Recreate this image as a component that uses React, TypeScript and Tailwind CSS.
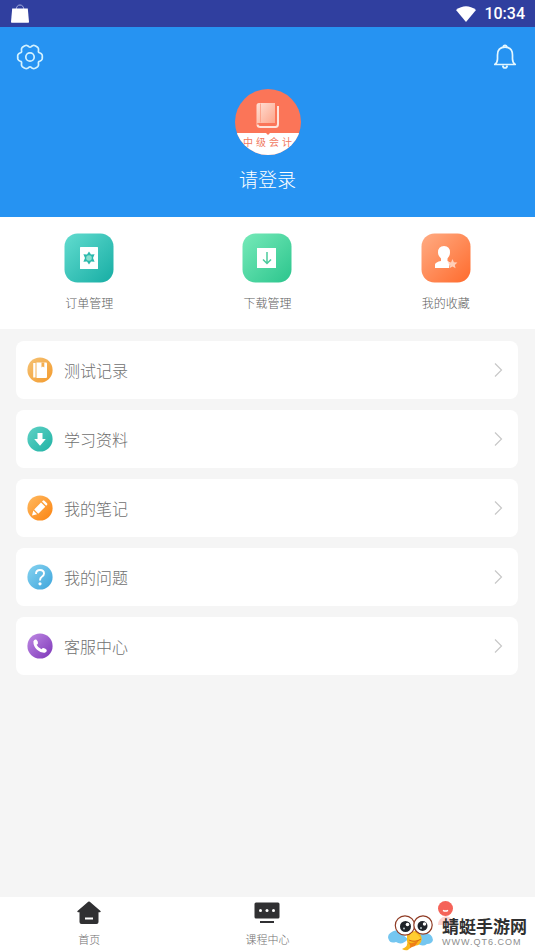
import type { ReactNode } from "react";

const gearPath =
  Array.from({ length: 120 }, (_, i) => {
    const a = (i / 120) * Math.PI * 2;
    const r = 11.5 + 1.2 * Math.cos(6 * a) - 0.4 * Math.cos(12 * a);
    return `${i ? "L" : "M"}${(14 + r * Math.cos(a)).toFixed(2)} ${(14 + r * Math.sin(a)).toFixed(2)}`;
  }).join("") + "Z";

function Gradient({ id, from, to }: { id: string; from: string; to: string }) {
  return (
    <defs>
      <linearGradient id={id} x1="0" y1="0" x2="1" y2="1">
        <stop offset="0" stopColor={from} />
        <stop offset="1" stopColor={to} />
      </linearGradient>
    </defs>
  );
}

function StatusBar() {
  return (
    <div className="flex h-[27px] items-center justify-between bg-[#303f9f] px-[10px] text-white">
      <svg className="h-5 w-5" viewBox="0 0 20 20">
        <path d="M6 6Q6.500 1 10 1Q13.500 1 14 6" fill="none" stroke="#aab2e0" strokeWidth="1" />
        <path d="M2.200 4.500h15.600L19 18Q19 18.700 18.300 18.700H1.700Q1 18.700 1 18Z" fill="#fff" />
      </svg>
      <div className="flex items-center gap-2">
        <svg className="h-4 w-5" viewBox="0 0 20 16">
          <path d="M0 4Q10-3.500 20 4L10 16Z" fill="#fff" />
        </svg>
        <span className="pt-px font-['Roboto',sans-serif] text-base font-medium">10:34</span>
      </div>
    </div>
  );
}

function Avatar() {
  return (
    <div className="relative h-[66px] w-[66px] overflow-hidden rounded-full bg-[#fb7558]">
      <svg className="absolute inset-0 h-full w-full" viewBox="0 0 66 66">
        <defs>
          <linearGradient id="book" x1="0" y1="0" x2="1" y2="1">
            <stop offset="0" stopColor="#ffe1d6" />
            <stop offset="1" stopColor="#fda287" />
          </linearGradient>
        </defs>
        <path d="M24 14h16v20H24q-2.500 0-2.500 2V16.500q0-2.500 2.500-2.500Z" fill="url(#book)" />
        <path d="M25.500 14.500V33.500" stroke="#fb9a80" strokeWidth="0.800" />
        <path d="M43 17v17.500M22.500 35.500Q22.500 38 25.500 38H40.500Q43 38 43 35V17" fill="none" stroke="#ffe3da" strokeWidth="2" />
        <path d="M0 44H66V66H0Z" fill="#fff" />
        <path d="M31 44h4l-2 2Z" fill="#fb7558" />
      </svg>
      <span className="absolute inset-x-0 top-[47px] flex justify-center gap-[3px] text-[10px] leading-3 text-[#f0785f]">
        <span>中</span>
        <span>级</span>
        <span>会</span>
        <span>计</span>
      </span>
    </div>
  );
}

function Header() {
  return (
    <header className="relative flex h-[190px] flex-col items-center bg-[#2693f2] pt-[62px] text-white">
      <button aria-label="设置" className="absolute top-4 left-4">
        <svg className="h-7 w-7" viewBox="0 0 28 28" fill="none" stroke="#d3f2ff" strokeWidth="1.700" strokeLinejoin="round">
          <path d={gearPath} />
          <circle cx="14" cy="14" r="4.200" />
        </svg>
      </button>
      <button aria-label="消息" className="absolute top-[17px] right-[18px]">
        <svg className="h-[26px] w-6" viewBox="0 0 24 26" fill="none" stroke="#e4f7ff" strokeWidth="1.700" strokeLinejoin="round">
          <path d="M10.300 3.300Q10.300 1.400 12 1.400Q13.700 1.400 13.700 3.300" />
          <path d="M1.800 20.500Q4.500 18.500 4.500 15V11Q4.500 3.200 12 3.200Q19.500 3.200 19.500 11V15Q19.500 18.500 22.200 20.500Z" />
          <path d="M9.700 21.500Q10.200 24 12 24Q13.800 24 14.300 21.500" />
        </svg>
      </button>
      <Avatar />
      <button className="mt-[10px] text-[19px] leading-7 font-light">请登录</button>
    </header>
  );
}

function Tile({ id, from, to, children }: { id: string; from: string; to: string; children: ReactNode }) {
  return (
    <svg className="h-[50px] w-[50px]" viewBox="0 0 50 50">
      <Gradient id={id} from={from} to={to} />
      <rect x="0.500" y="0.500" width="49" height="49" rx="13" fill={`url(#${id})`} />
      {children}
    </svg>
  );
}

const shortcuts = [
  {
    label: "订单管理",
    icon: (
      <Tile id="order" from="#62dccf" to="#17ada4">
        <rect x="16" y="14" width="18" height="22" rx="0.500" fill="#fff" />
        <path d="M25 18.500l2 3 3.600-.2-1.600 3.700 1.600 3.700-3.600-.2-2 3-2-3-3.600.2 1.600-3.700-1.600-3.700 3.600.2Z" fill="#2bb9ad" />
        <circle cx="25" cy="25" r="2.800" fill="#8ae0cf" />
      </Tile>
    ),
  },
  {
    label: "下载管理",
    icon: (
      <Tile id="download" from="#76eab9" to="#2cc58d">
        <rect x="15" y="15" width="19" height="20" fill="#fff" />
        <path d="M25 19V30M21 26.500l4 4 4-4" fill="none" stroke="#4bcb9c" strokeWidth="1.500" />
      </Tile>
    ),
  },
  {
    label: "我的收藏",
    icon: (
      <Tile id="favorite" from="#ffac84" to="#ff6b2d">
        <path d="M17 19.500Q17 13 23 13Q29 13 29 19.500Q29 23 26.500 25.500V28L29 29.500L28 35H14V31.500Q14.500 29 20 28V25.500Q17 23 17 19.500Z" fill="#fff" />
        <path d="M31.500 26l1.400 3.200 3.500.3-2.600 2.400.8 3.400-3.100-1.800-3 1.800.8-3.400-2.700-2.400 3.500-.3Z" fill="#ffcfb9" />
      </Tile>
    ),
  },
];

function Badge({ id, from, to, children }: { id: string; from: string; to: string; children: ReactNode }) {
  return (
    <svg className="h-[26px] w-[26px] shrink-0" viewBox="0 0 26 26">
      <Gradient id={id} from={from} to={to} />
      <circle cx="13" cy="13" r="12.600" fill={`url(#${id})`} />
      {children}
    </svg>
  );
}

const entries = [
  {
    label: "测试记录",
    icon: (
      <Badge id="records" from="#f5c376" to="#f39a2c">
        <path d="M6.200 6h2.300v14.500H6.200Z" fill="#fff" />
        <path d="M9.500 5.500H19q1 0 1 1V20q0 1-1 1H9.500Z" fill="#fff" />
        <path d="M14.500 5.500h2.800v5l-1.400-1-1.400 1Z" fill="#f4ae50" />
      </Badge>
    ),
  },
  {
    label: "学习资料",
    icon: (
      <Badge id="material" from="#5fd2c6" to="#20b2a4">
        <path d="M10.500 7h5v6h3.300L13 19.800 7.200 13h3.300Z" fill="#fff" />
      </Badge>
    ),
  },
  {
    label: "我的笔记",
    icon: (
      <Badge id="notes" from="#ffba61" to="#fb8310">
        <path d="M5 20.500l1.300-5 3.800 3.800ZM7.200 14.500L14 7.500l4.300 4.200-7 7ZM15 6.500l.8-.8q.8-.7 1.600 0L20 8.300q.7.8 0 1.600l-.8.8Z" fill="#fff" />
      </Badge>
    ),
  },
  {
    label: "我的问题",
    icon: (
      <Badge id="questions" from="#87d3f0" to="#3da5dc">
        <path d="M9 10Q9 6 13 6Q17 6 17 9.600Q17 11.500 14.800 12.800Q13 13.900 13 16.500" fill="none" stroke="#fff" strokeWidth="1.900" />
        <circle cx="13" cy="19.800" r="1.600" fill="#fff" />
      </Badge>
    ),
  },
  {
    label: "客服中心",
    icon: (
      <Badge id="service" from="#c08be4" to="#7c35b8">
        <path d="M6.400 8.200Q7.300 6 9.200 6.600Q11.200 8.400 11 10.200Q10.700 11.200 9.600 11.700Q11 14.800 14.500 16.300Q15.300 15 16.500 15Q18.600 15.300 19.800 17Q20 19 17.800 19.800Q13.800 20.200 10 16.800Q6.200 13 6.400 8.200Z" fill="#fff" />
      </Badge>
    ),
  },
];

function BottomNav() {
  const item = "flex flex-col items-center gap-[6px] pt-1";
  return (
    <nav className="grid h-[54px] grid-cols-3 bg-white text-[11px] leading-4 font-light text-[#707070]">
      <button className={item}>
        <svg className="h-6 w-[26px]" viewBox="0 0 26 24">
          <path d="M12.200.8q.8-.7 1.600 0L24.500 10q.8 1-.5 1.300h-1.500V21q0 2-2 2H5.500q-2 0-2-2v-9.700H2Q.7 11 1.500 10Z" fill="#303032" />
          <path d="M9 17.500h8" stroke="#fff" strokeWidth="2" />
        </svg>
        首页
      </button>
      <button className={item}>
        <svg className="h-6 w-[26px]" viewBox="0 0 26 24">
          <rect x="0.500" y="1.500" width="25" height="16" rx="1.500" fill="#303032" />
          <path d="M6 21h14" stroke="#303032" strokeWidth="2" />
          <circle cx="6.500" cy="9.500" r="1.500" fill="#fff" />
          <circle cx="13" cy="9.500" r="1.500" fill="#fff" />
          <circle cx="19.500" cy="9.500" r="1.500" fill="#fff" />
        </svg>
        课程中心
      </button>
      <button aria-label="个人中心" className={item}>
        <svg className="h-6 w-[26px]" viewBox="0 0 26 24">
          <path d="M5 24Q5 17 13 15Q21 17 21 24Z" fill="#fdd3d0" />
          <circle cx="12.500" cy="7.500" r="7.500" fill="#f56359" />
          <path d="M10 9.300q2.500 1.500 5 0" fill="none" stroke="#fff" strokeWidth="1.500" />
        </svg>
      </button>
    </nav>
  );
}

function Watermark() {
  return (
    <div className="pointer-events-none absolute right-2 bottom-0 flex items-end gap-2">
      <svg className="h-9 w-[46px]" viewBox="0 0 46 36">
        <path d="M9 15Q-2 18 .5 24Q2 29 8 27Q14 31 20 24ZM34 16Q45 19 45 25Q44 29 39 29Q34 33 28 27Z" fill="#74c6f0" />
        <path d="M19 17L28 16Q36 21 33 27Q30 32 26 30Q23 31 20 35Q17 36 14 34Q21 31 19 26Z" fill="#f9b91c" />
        <path d="M20 27Q24 30 31 25L27 31Q23 32 21 34Q24 31 20 27Z" fill="#ef7e16" />
        <circle cx="17" cy="10.500" r="9.700" fill="#fff" stroke="#8f3b24" strokeWidth="1.200" />
        <circle cx="35" cy="10" r="9.200" fill="#fff" stroke="#8f3b24" strokeWidth="1.200" />
        <circle cx="17.500" cy="11.500" r="5.500" fill="#20242a" />
        <circle cx="34.500" cy="11" r="5" fill="#20242a" />
        <circle cx="19.500" cy="9.500" r="1.800" fill="#fff" />
        <circle cx="16" cy="13.500" r="1" fill="#b9c8cc" />
        <circle cx="36.500" cy="9" r="1.700" fill="#fff" />
        <circle cx="33" cy="13" r="1" fill="#b9c8cc" />
        <path d="M22 20Q25 15 29 19L33 24Q27 27 21 25Z" fill="#ffcd32" />
        <path d="M21 25Q27 28 33 24" fill="none" stroke="#d96613" strokeWidth="1" />
      </svg>
      <div className="pb-1 whitespace-nowrap">
        <div className="text-[17px] leading-5 font-bold text-[#303030]">蜻蜓手游网</div>
        <div className="mt-px font-['Liberation_Sans',sans-serif] text-[9px] leading-[10px] tracking-[1px] text-[#8e8e8e]">WWW.QT6.COM</div>
      </div>
    </div>
  );
}

export default function App() {
  return (
    <div className="relative flex min-h-screen flex-col bg-[#f5f5f5] font-['Noto_Sans_CJK_SC',sans-serif]">
      <StatusBar />
      <Header />
      <section className="grid h-28 grid-cols-3 bg-white">
        {shortcuts.map((s) => (
          <button key={s.label} className="flex flex-col items-center gap-[10px] pt-4 text-xs leading-5 font-light text-[#606060]">
            {s.icon}
            {s.label}
          </button>
        ))}
      </section>
      <main className="flex grow flex-col gap-[11px] pt-3 pr-[17px] pb-4 pl-4">
        {entries.map((e) => (
          <button key={e.label} className="flex h-[58px] items-center rounded-lg bg-white pr-3 pl-[11px] text-base font-light text-[#707070]">
            {e.icon}
            <span className="ml-[11px]">{e.label}</span>
            <svg className="ml-auto h-4 w-4" viewBox="0 0 16 16" fill="none" stroke="#c8c8c8" strokeWidth="1.200">
              <path d="M5 1.500L11.500 8 5 14.500" />
            </svg>
          </button>
        ))}
      </main>
      <BottomNav />
      <Watermark />
    </div>
  );
}
